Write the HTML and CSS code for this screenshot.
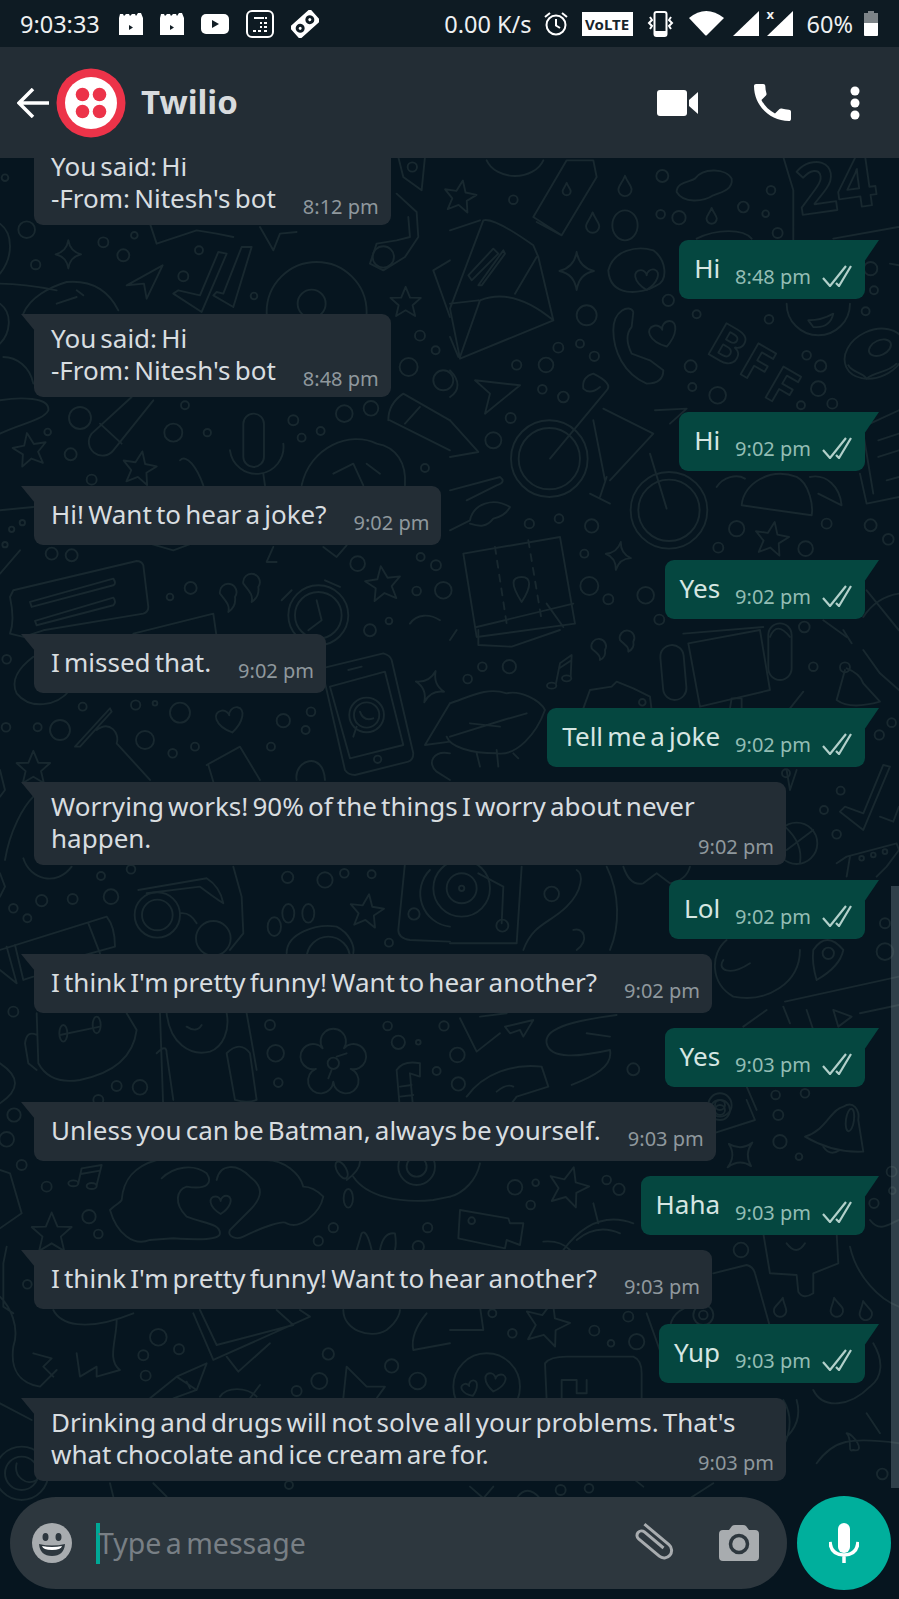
FILE: index.html
```html
<!DOCTYPE html>
<html>
<head>
  <meta charset="utf-8">
  <title>Twilio</title>
  <link rel="stylesheet" href="styles.css">
</head>
<body>
  <div class="phone">

    <!-- status bar -->
    <div class="status">
      <div class="status-left">
        <span class="clock">9:03:33</span>
        <svg width="24" height="22" viewBox="0 0 24 22"><path class="w" d="M0 5 1 1h3l1 2 2-2h3l1 2 2-2h3l1 2 2-3h3l2 5v17H0z"/><path class="k" d="M10 12l4 2.500-4 2.500z"/></svg>
        <svg width="24" height="22" viewBox="0 0 24 22"><path class="w" d="M0 5 1 1h3l1 2 2-2h3l1 2 2-2h3l1 2 2-3h3l2 5v17H0z"/><path class="k" d="M10 12l4 2.500-4 2.500z"/></svg>
        <svg width="28" height="20" viewBox="0 0 28 20"><rect class="w" width="28" height="20" rx="5"/><path class="k" d="M11 6l7 4-7 4z"/></svg>
        <svg width="28" height="28" viewBox="0 0 28 28"><rect class="line" x="1" y="1" width="26" height="26" rx="5"/><path class="w" d="M8 7h10v2H8zM19 7h2v2h-2zM14 12h2v2h-2zM18 12h3v2h-3zM14 16h2v2h-2zM18 16h3v2h-3zM7 20h3v2H7zM12 20h3v2h-3zM18 20h3v2h-3z"/></svg>
        <svg width="28" height="28" viewBox="0 0 28 28"><g transform="rotate(-42 14 14)"><rect class="w" x="0" y="6" width="28" height="16" rx="2"/><circle class="k" cx="7.500" cy="14" r="4.500"/><circle class="k" cx="20.500" cy="14" r="4.500"/><circle class="w" cx="7.500" cy="14" r="1.500"/><circle class="w" cx="20.500" cy="14" r="1.500"/></g></svg>
      </div>
      <div class="status-right">
        <span class="speed">0.00 K/s</span>
        <svg width="24" height="26" viewBox="0 0 24 26"><circle class="line" cx="12" cy="14" r="9.500"/><path class="line" d="M12 8v6.500l4 2.500M1 6l5-4M23 6l-5-4"/></svg>
        <span class="volte">V<i>o</i>LTE</span>
        <svg width="27" height="26" viewBox="0 0 27 26"><rect class="line" x="7.500" y="1" width="12" height="24" rx="2"/><path class="w" d="M8 20h11v5H8z"/><path class="line" d="M3 6l2 3-3 3 3 3-2 3M24 6l-2 3 3 3-3 3 2 3"/></svg>
        <div class="signal">
          <svg width="37" height="27" viewBox="0 0 37 27"><path class="w" d="M1 8Q18-6 36 8L19 25q-1 1-2 0z"/></svg>
          <svg width="26" height="25" viewBox="0 0 26 25"><path class="w" d="M26 0v25H0z"/></svg>
          <div class="sim">
            <span class="sim-x">x</span>
            <svg width="26" height="25" viewBox="0 0 26 25"><path class="w" d="M26 0v25H0z"/></svg>
          </div>
        </div>
        <span class="level">60%</span>
        <svg width="14" height="25" viewBox="0 0 14 25"><path class="dim" d="M4 0h6v2h4v11H0V2h4z"/><path class="w" d="M0 12h14v12q0 1-1 1H1q-1 0-1-1z"/></svg>
      </div>
    </div>

    <!-- header -->
    <div class="header">
      <svg class="back" width="32" height="30" viewBox="0 0 32 30"><path d="M32 15H2M16 1 2 15l14 14"/></svg>
      <svg class="avatar" width="70" height="70" viewBox="0 0 70 70">
        <circle cx="35" cy="35" r="34.500" fill="#ec3349"/>
        <circle cx="35" cy="35" r="26" fill="#fff"/>
        <circle cx="26.500" cy="26.500" r="6.800" fill="#ec3349"/>
        <circle cx="43.500" cy="26.500" r="6.800" fill="#ec3349"/>
        <circle cx="26.500" cy="43.500" r="6.800" fill="#ec3349"/>
        <circle cx="43.500" cy="43.500" r="6.800" fill="#ec3349"/>
      </svg>
      <span class="title">Twilio</span>
      <div class="actions">
        <svg width="41" height="26" viewBox="0 0 41 26"><rect class="w" width="30" height="26" rx="3"/><path class="w" d="M32 10 41 2v22l-9-8z"/></svg>
        <svg width="37" height="37" viewBox="3 3 18 18"><path class="w" d="M6.620 10.790c1.440 2.830 3.760 5.140 6.590 6.590l2.200-2.200c.27-.27.67-.36 1.020-.24 1.120.37 2.330.57 3.570.57.55 0 1 .45 1 1V20c0 .55-.45 1-1 1-9.390 0-17-7.610-17-17 0-.55.45-1 1-1h3.500c.55 0 1 .45 1 1 0 1.250.2 2.450.57 3.570.11.35.03.74-.25 1.020l-2.200 2.200z"/></svg>
        <svg class="more" width="10" height="34" viewBox="0 0 10 34"><circle class="w" cx="5" cy="5" r="4.500"/><circle class="w" cx="5" cy="17" r="4.500"/><circle class="w" cx="5" cy="29" r="4.500"/></svg>
      </div>
    </div>

    <!-- chat -->
    <div class="chat">
      <svg class="doodles" width="899" height="1441" viewBox="0 158 899 1441">
        <defs>
          <path id="star" d="M0-50 14-16 48-15 22 8 30 42 0 24-30 42-22 8-48-15-14-16Z"/>
          <path id="spark" d="M0-50Q6-10 45 0 6 8 0 50-6 8-45 0-6-10 0-50Z"/>
          <path id="heart" d="M0 40C-50 10-50-30-20-30-8-30 0-18 0-12 0-24 14-36 28-32 52-24 40 14 0 40Z"/>
          <path id="drop" d="M0-32C-8-10-22 2-22 14A22 22 0 0 0 22 14C22 2 8-10 0-32Z"/>
        </defs>

        <!-- top left -->
        <g transform="translate(0 157) scale(.3333)">
          <circle cx="80" cy="218" r="25"/><circle cx="15" cy="62" r="10"/><circle cx="310" cy="256" r="15"/><circle cx="403" cy="235" r="10"/><circle cx="370" cy="295" r="18"/><circle cx="107" cy="323" r="14"/><circle cx="597" cy="280" r="12"/><circle cx="550" cy="358" r="15"/><circle cx="762" cy="417" r="10"/><circle cx="1260" cy="536" r="15"/><circle cx="1307" cy="580" r="12"/><circle cx="1226" cy="630" r="27"/><circle cx="1330" cy="670" r="30"/><circle cx="555" cy="745" r="12"/><circle cx="240" cy="783" r="33"/><circle cx="520" cy="827" r="27"/><circle cx="622" cy="827" r="11"/><circle cx="143" cy="825" r="10"/><circle cx="212" cy="892" r="18"/><circle cx="275" cy="968" r="15"/><circle cx="880" cy="790" r="15"/><circle cx="905" cy="842" r="12"/><circle cx="962" cy="822" r="12"/><circle cx="1033" cy="770" r="25"/><circle cx="1113" cy="754" r="22"/><circle cx="1275" cy="933" r="12"/><circle cx="155" cy="1190" r="18"/><circle cx="215" cy="1195" r="18"/><circle cx="35" cy="1117" r="8"/><circle cx="67" cy="1097" r="8"/><circle cx="15" cy="1163" r="8"/><circle cx="1073" cy="1220" r="22"/><circle cx="1262" cy="1200" r="12"/><circle cx="1308" cy="1225" r="15"/><circle cx="1250" cy="1302" r="13"/><circle cx="1330" cy="1300" r="25"/><circle cx="1167" cy="1392" r="10"/><circle cx="1110" cy="1420" r="18"/><circle cx="572" cy="1293" r="18"/><circle cx="510" cy="1320" r="10"/><circle cx="1237" cy="30" r="14"/>
          <use href="#spark" transform="translate(205 292) scale(.85)"/>
          <use href="#star" transform="translate(1217 437) scale(.95)"/>
          <use href="#star" transform="translate(90 880) rotate(-10) scale(1.050)"/>
          <use href="#star" transform="translate(418 935) rotate(10) scale(1.050)"/>
          <use href="#star" transform="translate(1150 1282) rotate(-8) scale(1.100)"/>
          <path d="M380 385 488 325 440 425 432 380Z"/>
          <path d="M520 410 605 465 680 290 655 285 600 415 535 400Z"/>
          <path d="M640 415 700 450 755 270 725 270 670 410 650 405Z"/>
          <circle cx="950" cy="465" r="150"/><circle cx="935" cy="440" r="42"/>
          <path d="M1195 0 1210 60 1265 100 1275 0"/>
          <path d="M1190 110 1250 165 1255 240 1215 300 1150 340 1110 320 1130 260 1190 250 1230 240 1225 180"/>
          <circle cx="1150" cy="300" r="32"/>
          <path d="M70 470C90 420 150 390 200 375 260 370 320 390 355 460M170 440 230 420M230 400 250 415"/>
          <path d="M0 200C40 230 40 300 0 350M0 380C60 380 120 390 170 400M0 440C40 470 30 530 0 560M10 600C50 600 90 630 100 680M0 730C60 720 150 720 145 760 130 790 60 800 0 830"/>
          <path d="M460 730 340 880A30 30 0 0 1 275 830L395 720M300 800 365 860"/>
          <rect x="730" y="770" width="62" height="160" rx="31"/>
          <path d="M690 880A75 75 0 0 0 850 860M790 950 795 985M540 910C560 890 590 930 610 985"/>
          <path d="M905 985C930 870 1050 820 1130 860 1190 870 1220 920 1215 985M1000 950 1060 920 1090 985M1100 920 1140 950"/>
          <path d="M450 200 470 260 590 220 650 230 700 240M780 210 820 280 840 230 890 225"/>
          <path d="M1165 790Q1165 740 1210 710L1350 790M1170 790 1350 880M1215 800 1260 750"/>
          <path d="M1300 340 1350 310M1300 340 1350 480"/>
          <path d="M40 1300 410 1212Q425 1212 430 1225L445 1350Q445 1365 430 1370L130 1420 70 1440 30 1430Q45 1390 30 1320Z"/>
          <path d="M90 1335 340 1265Q350 1280 340 1285L95 1350ZM105 1392 340 1322Q350 1335 340 1345L110 1405Z"/>
          <path d="M660 1310A25 25 0 1 1 705 1320C708 1340 700 1355 685 1365 690 1345 680 1335 660 1310ZM730 1280A25 25 0 1 1 775 1290C778 1310 770 1325 755 1335 760 1315 750 1305 730 1280Z"/>
          <circle cx="955" cy="1375" r="90"/><circle cx="955" cy="1375" r="70"/>
          <path d="M950 1330 965 1390 925 1420M845 1330 875 1300M975 1270 1020 1290"/>
          <path d="M450 1160 520 1180 600 1150M820 1170 800 1215 830 1215M970 1170 1010 1200 1040 1165M0 1060 100 1050M0 1250 60 1180M1230 1400C1250 1370 1290 1370 1320 1390"/>
          <path d="M400 1430 640 1370 650 1440"/>
        </g>

        <!-- top right -->
        <g transform="translate(450 157) scale(.3333)">
          <use href="#star" transform="translate(30 120) rotate(10)"/>
          <path d="M250 180 350 10 430 10 440 60 335 235ZM260 195 335 235M110 10A90 70 0 0 0 280 10"/>
          <use href="#drop" transform="translate(350 95) scale(.55)"/>
          <use href="#drop" transform="translate(525 85) scale(.9)"/>
          <use href="#drop" transform="translate(428 195) scale(.9)"/>
          <use href="#drop" transform="translate(785 175) scale(.7)"/>
          <circle cx="637" cy="57" r="18"/><circle cx="190" cy="128" r="13"/><circle cx="632" cy="172" r="13"/><circle cx="687" cy="182" r="20"/><circle cx="880" cy="150" r="16"/><circle cx="947" cy="170" r="10"/><circle cx="963" cy="100" r="13"/><circle cx="983" cy="228" r="15"/><circle cx="1262" cy="335" r="20"/><circle cx="1272" cy="400" r="12"/>
          <ellipse cx="525" cy="205" rx="38" ry="45"/>
          <path d="M680 105C680 75 720 75 735 65 760 30 830 35 845 65 850 95 820 105 790 115 760 135 700 140 680 105Z"/>
          <path d="M1000 0 1030 100 1030 250M1150 245 1345 210M1320 320 1347 325M740 245C800 215 880 215 905 245"/>
          <text transform="translate(1050 175) rotate(-8)" font-size="210">24</text>
          <path d="M25 600 0 540M0 455 100 190Q130 180 250 265L265 300 310 490 30 605ZM30 600 90 430Q190 390 310 490M195 410 260 300M0 220 90 190M0 440 85 430"/>
          <path d="M55 355 130 275 145 290 65 370ZM85 385 160 280 165 290 95 385Z"/>
          <use href="#spark" transform="translate(380 342) scale(1.150)"/>
          <path d="M475 340C490 280 560 265 610 280 650 310 655 370 620 385 570 415 480 420 475 340Z"/>
          <use href="#heart" transform="translate(590 365) scale(.85)"/>
          <circle cx="655" cy="430" r="17"/><circle cx="410" cy="475" r="30"/><circle cx="325" cy="572" r="15"/><circle cx="390" cy="560" r="12"/><circle cx="433" cy="598" r="14"/><circle cx="200" cy="624" r="14"/><circle cx="288" cy="624" r="22"/><circle cx="277" cy="697" r="13"/><circle cx="340" cy="720" r="16"/><circle cx="182" cy="783" r="15"/><circle cx="130" cy="850" r="24"/><circle cx="740" cy="472" r="12"/><circle cx="957" cy="487" r="13"/><circle cx="1247" cy="463" r="12"/>
          <path d="M490 520C490 460 540 440 550 465L545 510Q520 540 545 590L600 610 640 640Q640 680 590 680C520 650 490 580 490 520Z"/>
          <use href="#heart" transform="translate(640 530) rotate(-15)"/>
          <text transform="translate(765 585) rotate(30)" font-size="150">B</text>
          <text transform="translate(860 645) rotate(30)" font-size="150">F</text>
          <text transform="translate(935 715) rotate(30)" font-size="150">F</text>
          <circle cx="722" cy="628" r="18"/><circle cx="727" cy="690" r="12"/><circle cx="803" cy="715" r="25"/><circle cx="1070" cy="595" r="13"/><circle cx="1112" cy="627" r="17"/><circle cx="1105" cy="695" r="22"/><circle cx="1053" cy="745" r="12"/><circle cx="1147" cy="740" r="15"/>
          <ellipse cx="1275" cy="590" rx="95" ry="70" transform="rotate(-25 1275 590)"/>
          <ellipse cx="1290" cy="572" rx="35" ry="22" transform="rotate(-25 1290 572)"/>
          <path d="M1195 625C1210 650 1230 640 1250 665 1280 640 1310 650 1340 620"/>
          <path d="M1010 440A95 95 0 0 0 1200 440M1075 490Q1115 490 1150 470 1140 515 1090 510Z"/>
          <path d="M75 670 210 685 105 770 120 710Z"/>
          <path d="M0 640C30 670 30 700 0 720M0 790 85 885 0 900"/>
          <circle cx="298" cy="905" r="115"/><circle cx="298" cy="905" r="92"/><circle cx="657" cy="1060" r="115"/><circle cx="657" cy="1060" r="92"/>
          <path d="M300 905 470 700Q490 680 430 650 395 660 400 695 420 715 450 690M430 790 465 970M460 755 610 830 480 970M600 890 650 1055M615 760 710 755 660 800M420 1010 480 1040M470 960 450 1020"/>
          <path d="M875 1045C880 980 960 930 1040 960 1080 980 1090 1050 1085 1075ZM800 990C820 960 860 950 885 965M1080 960C1130 950 1170 990 1175 1045L1105 1010"/>
          <use href="#star" transform="translate(965 1147) rotate(10) scale(1.050)"/>
          <circle cx="860" cy="1115" r="23"/><circle cx="805" cy="1172" r="15"/><circle cx="1067" cy="1175" r="22"/><circle cx="1130" cy="1100" r="15"/><circle cx="1262" cy="1105" r="18"/><circle cx="1315" cy="1147" r="16"/><circle cx="425" cy="1107" r="20"/><circle cx="327" cy="1085" r="13"/><circle cx="238" cy="1100" r="14"/><circle cx="403" cy="1190" r="12"/>
          <use href="#spark" transform="translate(505 1197) rotate(10) scale(.85)"/>
          <path d="M40 1190 330 1140 375 1400 80 1440ZM80 1410 370 1340M290 1340 340 1410"/>
          <path class="dash" d="M135 1170 170 1400M235 1150 275 1390"/>
          <path d="M215 1335C180 1280 185 1260 215 1260 245 1260 245 1290 215 1335Z"/>
          <circle cx="418" cy="1287" r="27"/><circle cx="475" cy="1327" r="15"/><circle cx="587" cy="1315" r="25"/><circle cx="628" cy="1388" r="15"/><circle cx="1063" cy="1410" r="16"/>
          <path d="M0 1000 150 960Q170 975 140 985L50 1030M0 1120 60 1090C70 1040 130 1020 180 1050 170 1070 150 1080 130 1085 110 1110 90 1110 60 1100"/>
          <path d="M1230 950 1250 1040 1347 1020M1260 800 1347 760M1285 850 1347 830M1285 900 1347 880M1310 970 1347 960M1240 830 1270 1010"/>
          <path d="M700 1430 940 1410M960 1440Q980 1390 1020 1440M1120 1390 1190 1440M1250 1300 1347 1420M1240 1380Q1280 1320 1347 1310"/>
        </g>

        <!-- middle left -->
        <g transform="translate(0 630) scale(.3333)">
          <path d="M100 80C60 110 30 150 50 190 90 240 170 230 210 180"/>
          <circle cx="20" cy="88" r="13"/><circle cx="18" cy="292" r="13"/><circle cx="113" cy="292" r="12"/><circle cx="180" cy="300" r="30"/><circle cx="248" cy="230" r="12"/><circle cx="407" cy="225" r="14"/><circle cx="465" cy="220" r="7"/><circle cx="540" cy="248" r="30"/><circle cx="435" cy="330" r="27"/><circle cx="518" cy="370" r="13"/><circle cx="585" cy="350" r="12"/><circle cx="850" cy="272" r="20"/><circle cx="933" cy="245" r="13"/><circle cx="917" cy="300" r="12"/><circle cx="813" cy="350" r="12"/>
          <use href="#heart" transform="translate(690 268) rotate(-10)"/>
          <path d="M225 350 330 235 335 245 240 350ZM290 300C330 270 360 310 350 340L450 450"/>
          <use href="#star" transform="translate(100 415) scale(1.050)"/>
          <path d="M620 405 720 350 780 450M640 455 625 405"/>
          <path d="M965 115 1150 70Q1170 75 1175 90L1240 370Q1240 390 1225 395L1065 435Q1045 435 1035 420ZM990 170 1155 125 1210 345 1050 385ZM1045 120 1085 110"/>
          <circle cx="1100" cy="255" r="52"/><circle cx="1100" cy="255" r="38"/><circle cx="1133" cy="388" r="11"/>
          <path d="M1060 320 1070 290M1080 245Q1090 275 1120 265"/>
          <use href="#spark" transform="translate(1290 170) rotate(20)"/>
          <path d="M1350 220 1275 345 1350 335M890 450C880 390 970 360 975 450M1350 370C1300 360 1280 400 1310 425L1350 450"/>
          <path d="M15 690C30 600 70 530 100 500M70 685C90 750 170 770 215 710M0 420 15 480 0 500M0 730 15 770 0 800"/>
          <circle cx="303" cy="738" r="12"/><circle cx="393" cy="718" r="13"/><circle cx="125" cy="812" r="17"/><circle cx="218" cy="807" r="15"/><circle cx="333" cy="800" r="22"/><circle cx="40" cy="835" r="13"/><circle cx="82" cy="865" r="12"/>
          <circle cx="472" cy="855" r="46"/><circle cx="472" cy="855" r="68"/><circle cx="640" cy="925" r="52"/>
          <path d="M415 780 620 745Q660 770 670 820 640 800 600 770L440 790M540 850Q570 845 590 880M700 710 725 800 730 910 690 960"/>
          <path d="M0 960 320 860Q345 890 345 950L200 990M265 880 300 970M20 950 50 1060 0 1020M45 945 70 1050 100 1040"/>
          <ellipse cx="823" cy="890" rx="20" ry="28"/><ellipse cx="865" cy="850" rx="18" ry="28"/><ellipse cx="925" cy="850" rx="18" ry="28"/>
          <path d="M860 970C860 910 950 880 1010 890 1050 910 1065 950 1060 970"/><circle cx="985" cy="985" r="65"/>
          <use href="#star" transform="translate(1100 845) rotate(8) scale(1.050)"/>
          <circle cx="863" cy="742" r="17"/><circle cx="975" cy="750" r="23"/><circle cx="1033" cy="730" r="13"/><circle cx="1115" cy="733" r="12"/><circle cx="1242" cy="852" r="17"/><circle cx="1167" cy="938" r="12"/>
          <path d="M1215 700 1195 900Q1195 925 1230 930L1350 935M1290 720A100 100 0 0 0 1350 890"/>
          <path d="M110 1150 115 1300Q150 1365 240 1350C340 1330 400 1280 410 1200L380 1150M75 1240Q80 1200 110 1215M75 1240 85 1300 110 1320M180 1215 300 1190"/>
          <ellipse cx="190" cy="1210" rx="12" ry="25"/><ellipse cx="290" cy="1185" rx="12" ry="25"/>
          <path d="M480 1150 490 1440M500 1150C510 1240 570 1280 630 1265 670 1250 690 1200 680 1150M560 1190Q590 1210 605 1185M740 1150 770 1320M470 1270Q500 1240 500 1270L520 1410M680 1270Q720 1230 750 1270L770 1410Q740 1420 705 1410Z"/>
          <circle cx="40" cy="1145" r="15"/><circle cx="810" cy="1185" r="15"/><circle cx="827" cy="1270" r="25"/><circle cx="835" cy="1358" r="13"/><circle cx="350" cy="1368" r="15"/><circle cx="420" cy="1372" r="22"/><circle cx="295" cy="1410" r="15"/><circle cx="1163" cy="1188" r="13"/><circle cx="1195" cy="1237" r="20"/><circle cx="1255" cy="1237" r="7"/><circle cx="1332" cy="1188" r="14"/><circle cx="1310" cy="1323" r="12"/>
          <path d="M968 1255A38 38 0 1 1 1032 1255 38 38 0 1 1 1052 1317 38 38 0 1 1 1000 1355 38 38 0 1 1 948 1317 38 38 0 1 1 968 1255Z"/>
          <circle cx="1000" cy="1300" r="17"/>
          <path d="M985 1345 995 1320M1010 1280 1040 1270"/>
          <path d="M1200 1440 1190 1320Q1210 1290 1260 1300L1260 1340 1230 1330 1240 1440M1200 1370 1235 1365M1200 1400 1240 1395"/>
          <path d="M0 1300C60 1340 60 1380 0 1420"/>
        </g>

        <!-- middle right -->
        <g transform="translate(450 630) scale(.3333)">
          <circle cx="97" cy="110" r="13"/><circle cx="53" cy="147" r="13"/><circle cx="178" cy="110" r="20"/><circle cx="1090" cy="110" r="13"/><circle cx="1325" cy="278" r="13"/><circle cx="1288" cy="315" r="14"/><circle cx="1172" cy="482" r="12"/><circle cx="1122" cy="540" r="12"/><circle cx="1160" cy="613" r="13"/><circle cx="1235" cy="685" r="7"/><circle cx="1270" cy="675" r="7"/><circle cx="1305" cy="665" r="7"/><circle cx="305" cy="792" r="22"/><circle cx="577" cy="217" r="10"/><circle cx="22" cy="1275" r="22"/><circle cx="550" cy="1318" r="18"/><circle cx="25" cy="1362" r="20"/><circle cx="977" cy="1395" r="13"/><circle cx="1065" cy="1390" r="13"/><circle cx="1135" cy="970" r="17"/><circle cx="1305" cy="880" r="15"/><circle cx="1305" cy="965" r="25"/>
          <ellipse cx="305" cy="167" rx="14" ry="9"/><ellipse cx="350" cy="145" rx="14" ry="9"/>
          <path d="M318 160 330 100 365 75 362 140M328 115 362 92"/>
          <path d="M425 55A22 22 0 1 1 465 60C468 75 460 85 450 90 452 75 440 70 425 55ZM510 30A22 22 0 1 1 550 35C553 50 545 60 535 65 537 50 525 45 510 30Z"/>
          <path d="M85 0 85 45 185 50 330 0M0 30 20 0"/>
          <rect x="635" y="45" width="70" height="165" rx="35" transform="rotate(-5 670 125)"/>
          <path d="M715 40 930 0 960 180 750 230Z"/><rect x="955" y="-20" width="70" height="170" rx="35"/>
          <path d="M0 220C60 200 110 170 170 190 210 180 270 210 285 240 260 310 200 380 140 370 60 370 0 350-10 320M0 320 160 270 230 250M60 280 150 290M80 370 90 410M140 360 145 410M190 370 205 385"/>
          <path d="M400 235 420 180 485 170 500 155 550 175 600 200 605 240"/>
          <path d="M1185 120 1160 210Q1200 240 1290 215L1240 160Q1230 130 1190 115"/><circle cx="1185" cy="112" r="15"/>
          <path d="M1020 235 1060 185M840 235 845 205 875 205 875 235M1240 60 1290 130 1347 180M1180 0 1205 40"/>
          <path d="M1170 545 1240 600 1320 410 1300 405 1240 550 1185 530ZM1290 560 1330 575 1347 530"/>
          <path d="M1010 420 1020 480 1040 420"/><circle cx="1008" cy="430" r="12"/>
          <circle cx="1040" cy="640" r="62"/>
          <path d="M1005 590Q1060 640 1050 700M1010 660 1090 600"/>
          <path d="M1160 700 1190 680 1340 640 1347 660 1310 710 1280 740M1200 680 1190 740"/>
          <path d="M1090 960Q1130 900 1180 960 1170 1010 1100 1050 1085 1000 1090 960Z"/>
          <circle cx="35" cy="775" r="85"/><circle cx="35" cy="775" r="45"/><circle cx="35" cy="775" r="8"/>
          <path d="M85 730 160 770 155 880M215 710 200 940 0 940"/><circle cx="157" cy="887" r="18"/>
          <path d="M220 960C250 880 300 880 350 830 400 780 400 730 380 720M470 710C510 790 510 890 480 960M380 960C420 930 400 890 370 900"/>
          <path d="M520 710Q540 770 580 760L620 730 660 760Q710 750 720 710"/>
          <path d="M830 930C780 970 780 1060 850 1100 950 1120 1050 1060 1050 960M820 990C800 1020 840 1040 900 1000"/>
          <path d="M1005 1115 1347 1040M1000 1130 1020 1180M1230 1150 1347 1125M1150 1140 1205 1160 1165 1190ZM1070 1140 1090 1200M880 1190 950 1140"/>
          <path d="M30 1165 80 1265 150 1210M165 1190 250 1170 220 1220 210 1200 180 1210ZM90 1160 170 1150"/>
          <path d="M500 1155C390 1170 280 1190 290 1240 300 1290 390 1280 480 1260 490 1310 430 1340 365 1365M410 1210 480 1220"/>
          <path d="M50 1400C100 1330 190 1300 275 1310L295 1370 200 1400 170 1440M140 1385Q170 1360 190 1370"/>
          <circle cx="810" cy="1425" r="35"/><circle cx="810" cy="1425" r="15"/>
          <path d="M890 1370 920 1440"/>
        </g>

        <!-- bottom left -->
        <g transform="translate(0 1100) scale(.3333)">
          <circle cx="42" cy="45" r="20"/><circle cx="20" cy="118" r="22"/><circle cx="65" cy="195" r="15"/><circle cx="140" cy="260" r="15"/><circle cx="267" cy="350" r="20"/><circle cx="295" cy="402" r="13"/><circle cx="1000" cy="383" r="14"/><circle cx="955" cy="423" r="14"/><circle cx="1283" cy="383" r="14"/><circle cx="1255" cy="440" r="17"/><circle cx="475" cy="712" r="25"/><circle cx="537" cy="748" r="15"/><circle cx="430" cy="766" r="15"/><circle cx="437" cy="827" r="15"/><circle cx="985" cy="762" r="17"/><circle cx="1175" cy="798" r="20"/><circle cx="958" cy="843" r="24"/><circle cx="1253" cy="843" r="25"/><circle cx="890" cy="873" r="15"/><circle cx="82" cy="553" r="13"/>
          <ellipse cx="220" cy="250" rx="15" ry="9"/><ellipse cx="275" cy="258" rx="15" ry="9"/>
          <path d="M235 250 245 205 305 195 290 255M242 222 300 212"/>
          <use href="#star" transform="translate(155 400) scale(1.250)"/>
          <path d="M485 235C520 200 580 190 620 220 640 250 620 270 560 260 530 270 520 310 560 350 610 370 660 370 660 400 660 420 600 420 520 415L450 420C400 440 350 400 330 330 350 310 360 310 365 300 370 240 400 200 470 180"/>
          <path d="M650 240C660 190 710 190 750 230 790 260 790 290 750 330L690 390C680 410 710 420 730 410 790 380 850 360 860 370 900 390 960 340 970 290 940 260 920 260 910 260 900 220 850 180 800 180"/>
          <use href="#heart" transform="translate(662 312) scale(.75)"/>
          <ellipse cx="1025" cy="210" rx="14" ry="28" transform="rotate(-30 1025 210)"/>
          <ellipse cx="1045" cy="295" rx="14" ry="28"/>
          <path d="M1060 230C1100 290 1200 310 1300 300L1350 290M1080 185Q1080 210 1040 240"/>
          <circle cx="1250" cy="200" r="55"/><circle cx="1250" cy="200" r="30"/>
          <path d="M1070 450 1085 400Q1100 385 1115 450M1140 450Q1150 395 1185 400 1190 430 1185 450"/>
          <path d="M20 440 10 490 10 620 40 640M0 590C30 620 60 680 40 740 30 810 60 850 120 860L170 810M100 760 155 775 130 800 160 830M230 760 240 830 290 800 290 830 360 810C320 780 350 720 350 660M160 630C180 670 250 700 400 640"/>
          <path d="M580 640 640 780 930 650 900 630M600 630 650 735 880 675 830 630M680 770 715 815 810 730"/>
          <path d="M450 895 530 830 620 790 590 870 520 895M530 830 590 870M560 845 570 865"/>
          <path d="M1040 800 1030 895M1040 800 1100 860 1155 860 1130 895"/>
          <path d="M1030 630C1030 690 1110 720 1160 690 1200 660 1200 630 1200 630M1240 750Q1230 700 1280 640M1240 750 1350 730"/>
          <path d="M0 210 30 220 65 340 0 385"/>
          <circle cx="65" cy="1120" r="80"/><circle cx="65" cy="1120" r="50"/>
          <path d="M0 910 95 960M50 1090C40 1130 80 1160 110 1140"/>
          <path d="M330 1150 340 1190M460 1150 500 1190"/>
          <circle cx="867" cy="1155" r="12"/>
          <path d="M660 890C680 860 740 860 770 890M750 895 780 855"/>
        </g>

        <!-- bottom right -->
        <g transform="translate(450 1100) scale(.3333)">
          <circle cx="985" cy="45" r="15"/><circle cx="990" cy="125" r="20"/><circle cx="1047" cy="170" r="10"/><circle cx="195" cy="262" r="22"/><circle cx="257" cy="248" r="10"/><circle cx="242" cy="315" r="13"/><circle cx="470" cy="240" r="13"/><circle cx="507" cy="268" r="17"/><circle cx="1325" cy="215" r="15"/><circle cx="1327" cy="272" r="10"/><circle cx="1272" cy="310" r="14"/><circle cx="873" cy="450" r="22"/><circle cx="535" cy="650" r="15"/><circle cx="127" cy="640" r="12"/><circle cx="187" cy="700" r="13"/><circle cx="433" cy="692" r="15"/><circle cx="483" cy="730" r="10"/><circle cx="560" cy="725" r="23"/><circle cx="332" cy="1170" r="15"/><circle cx="417" cy="1165" r="13"/><circle cx="1297" cy="1122" r="16"/>
          <circle cx="810" cy="30" r="30"/><circle cx="810" cy="30" r="15"/>
          <path d="M790 100 915 60 890 0M90 190C80 240 40 280 0 290"/>
          <path d="M1065 110C1130 90 1140 30 1180 20 1210 0 1230 30 1225 60L1240 155Q1150 160 1065 110Z"/>
          <ellipse cx="1200" cy="60" rx="12" ry="34" transform="rotate(8 1200 60)"/>
          <path d="M1120 140Q1140 170 1170 150"/>
          <use href="#spark" transform="translate(870 165) rotate(45) scale(1.050)"/>
          <use href="#star" transform="translate(355 262) rotate(15) scale(1.250)"/>
          <path d="M30 330 175 355 180 370 220 370 210 435 170 420 165 445 25 415Z"/><circle cx="65" cy="362" r="10"/>
          <path d="M340 450C400 370 470 340 550 370M280 425Q330 420 360 450M430 310 445 370M380 420Q440 370 510 400"/>
          <path d="M940 400 1160 400 1165 490 1090 520 1090 580Q1060 600 1045 575L1040 525 960 520ZM1010 430Q1040 470 1065 430"/>
          <use href="#drop" transform="translate(993 620) rotate(12) scale(.85)"/>
          <use href="#drop" transform="translate(1158 620) rotate(-12) scale(.85)"/>
          <use href="#drop" transform="translate(1245 630) rotate(-12) scale(.85)"/>
          <path d="M790 520 890 495Q910 500 915 520L960 680M590 640 640 780M660 680Q670 620 760 610"/>
          <circle cx="760" cy="645" r="30"/><circle cx="760" cy="645" r="13"/>
          <use href="#star" transform="translate(290 672) rotate(15) scale(1.400)"/>
          <path d="M0 690 100 690 90 620"/>
          <circle cx="110" cy="860" r="100"/>
          <use href="#heart" transform="translate(60 865) rotate(-20) scale(.6)"/>
          <use href="#heart" transform="translate(135 845) rotate(10) scale(.75)"/>
          <path d="M285 790Q300 770 350 770L550 770Q575 780 575 820L575 900M285 790 290 900M335 900 335 840 380 840 380 880 410 880 410 840"/>
          <path d="M1000 900C1030 950 1020 1000 1000 1040M1040 900Q1060 970 1000 1020"/>
          <path d="M1190 1000C1210 1000 1250 1060 1210 1050 1190 1060 1210 1020 1190 1000M1090 870C1120 930 1200 920 1260 860 1300 830 1300 780 1270 730M1100 1090C1150 1020 1200 1010 1347 1030M1250 940 1290 1000M1260 360C1290 400 1320 370 1347 360"/>
          <path d="M1200 440C1220 530 1290 600 1347 620"/>
          <path d="M60 1160 100 1195 130 1160M200 1195Q230 1150 270 1195M530 1120 580 1160M790 1150 720 1195"/>
        </g>
      </svg>

      <div class="msg in two first">
        <p>You said: Hi
-From: Nitesh's bot</p>
        <span class="time">8:12 pm</span>
      </div>
      <div class="msg out">
        <p>Hi</p>
        <span class="time">8:48 pm</span>
        <svg class="ticks" width="30" height="22" viewBox="0 0 30 22"><path d="M1 13l7 8L24 1M14 18l3 3L29 1"/></svg>
      </div>
      <div class="msg in two">
        <p>You said: Hi
-From: Nitesh's bot</p>
        <span class="time">8:48 pm</span>
      </div>
      <div class="msg out">
        <p>Hi</p>
        <span class="time">9:02 pm</span>
        <svg class="ticks" width="30" height="22" viewBox="0 0 30 22"><path d="M1 13l7 8L24 1M14 18l3 3L29 1"/></svg>
      </div>
      <div class="msg in">
        <p>Hi! Want to hear a joke?</p>
        <span class="time">9:02 pm</span>
      </div>
      <div class="msg out">
        <p>Yes</p>
        <span class="time">9:02 pm</span>
        <svg class="ticks" width="30" height="22" viewBox="0 0 30 22"><path d="M1 13l7 8L24 1M14 18l3 3L29 1"/></svg>
      </div>
      <div class="msg in">
        <p>I missed that.</p>
        <span class="time">9:02 pm</span>
      </div>
      <div class="msg out">
        <p>Tell me a joke</p>
        <span class="time">9:02 pm</span>
        <svg class="ticks" width="30" height="22" viewBox="0 0 30 22"><path d="M1 13l7 8L24 1M14 18l3 3L29 1"/></svg>
      </div>
      <div class="msg in two wide">
        <p>Worrying works! 90% of the things I worry about never happen.</p>
        <span class="time">9:02 pm</span>
      </div>
      <div class="msg out">
        <p>Lol</p>
        <span class="time">9:02 pm</span>
        <svg class="ticks" width="30" height="22" viewBox="0 0 30 22"><path d="M1 13l7 8L24 1M14 18l3 3L29 1"/></svg>
      </div>
      <div class="msg in">
        <p>I think I'm pretty funny! Want to hear another?</p>
        <span class="time">9:02 pm</span>
      </div>
      <div class="msg out">
        <p>Yes</p>
        <span class="time">9:03 pm</span>
        <svg class="ticks" width="30" height="22" viewBox="0 0 30 22"><path d="M1 13l7 8L24 1M14 18l3 3L29 1"/></svg>
      </div>
      <div class="msg in">
        <p>Unless you can be Batman, always be yourself.</p>
        <span class="time">9:03 pm</span>
      </div>
      <div class="msg out">
        <p>Haha</p>
        <span class="time">9:03 pm</span>
        <svg class="ticks" width="30" height="22" viewBox="0 0 30 22"><path d="M1 13l7 8L24 1M14 18l3 3L29 1"/></svg>
      </div>
      <div class="msg in">
        <p>I think I'm pretty funny! Want to hear another?</p>
        <span class="time">9:03 pm</span>
      </div>
      <div class="msg out">
        <p>Yup</p>
        <span class="time">9:03 pm</span>
        <svg class="ticks" width="30" height="22" viewBox="0 0 30 22"><path d="M1 13l7 8L24 1M14 18l3 3L29 1"/></svg>
      </div>
      <div class="msg in two wide">
        <p>Drinking and drugs will not solve all your problems. That's what chocolate and ice cream are for.</p>
        <span class="time">9:03 pm</span>
      </div>

      <div class="scrollbar"></div>

      <!-- input bar -->
      <div class="composer">
        <div class="field">
          <svg width="40" height="40" viewBox="0 0 40 40">
            <circle cx="20" cy="20" r="20" fill="#a8acaf"/>
            <ellipse cx="13.500" cy="14" rx="3" ry="4" fill="#2d373e"/>
            <ellipse cx="26.500" cy="14" rx="3" ry="4" fill="#2d373e"/>
            <path d="M7 21Q20 24 33 21 32 33 20 33 8 33 7 21Z" fill="#2d373e"/>
            <path d="M10 23Q20 25 30 23 29 27 20 27 11 27 10 23Z" fill="#fff"/>
          </svg>
          <span class="caret"></span>
          <span class="placeholder">Type a message</span>
          <svg class="clip" width="48" height="40" viewBox="0 0 48 40"><path transform="rotate(40 24 20)" d="M3 13H35A7.500 7.500 0 0 1 35 28H8A4.500 4.500 0 0 1 8 19H33"/></svg>
          <svg class="cam" width="40" height="36" viewBox="0 0 40 36">
            <path d="M0 9Q0 5 4 5H10L13 1Q14 0 16 0H24Q26 0 27 1L30 5H36Q40 5 40 9V32Q40 36 36 36H4Q0 36 0 32Z" fill="#a8acaf"/>
            <circle cx="20" cy="19" r="8.500" fill="none" stroke="#2d373e" stroke-width="3.500"/>
          </svg>
        </div>
        <div class="mic">
          <svg width="30" height="40" viewBox="0 0 30 40">
            <rect x="9" y="0" width="12" height="30" rx="6" fill="#fff"/>
            <path d="M1 19Q2 32 15 32 28 32 29 19M15 31V40" fill="none" stroke="#fff" stroke-width="3.500"/>
          </svg>
        </div>
      </div>
    </div>
  </div>
</body>
</html>
```

FILE: styles.css
```css
/* page */
body {
  margin: 0;
  background: #06151f;
  font-family: "Noto Sans", "Open Sans", sans-serif;
  overflow: hidden;
}

.phone {
  width: 899px;
  height: 1599px;
  display: flex;
  flex-direction: column;
  overflow: hidden;
}

svg {
  display: block;
  flex: none;
}

.w { fill: #fff; }
.k { fill: #101c24; }
.dim { fill: #7d8488; }
.line { fill: none; stroke: #fff; stroke-width: 2; }

/* status bar */
.status {
  height: 47px;
  flex: none;
  background: #0e1b23;
  color: #eef0f1;
  display: flex;
  align-items: center;
  justify-content: space-between;
  padding: 0 21px 0 20px;
  font-size: 23.500px;
}

.status-left,
.status-right,
.signal {
  display: flex;
  align-items: center;
}

.status-left { gap: 17px; }
.status-left .clock { margin-right: 2px; }
.status-right { gap: 14px; }
.status-right .speed { margin-right: -2px; }
.status-right .level { margin-right: -3px; }
.signal { gap: 8px; }

.sim { position: relative; }

.sim-x {
  position: absolute;
  left: 0;
  top: -6px;
  font-size: 13px;
  font-weight: 700;
}

.volte {
  width: 51px;
  height: 24px;
  background: #fff;
  color: #18242c;
  font-size: 15px;
  font-weight: 700;
  line-height: 24px;
  text-align: center;
}

.volte i {
  font-style: normal;
}

/* header */
.header {
  height: 111px;
  flex: none;
  background: #232d35;
  display: flex;
  align-items: center;
  position: relative;
  z-index: 2;
}

.back {
  margin-left: 17px;
  margin-right: 7px;
}

.back path {
  fill: none;
  stroke: #fff;
  stroke-width: 3.500;
}

.title {
  margin-left: 15px;
  margin-bottom: 2px;
  font-size: 33px;
  font-weight: 700;
  color: #d8dbde;
}

.actions {
  margin-left: auto;
  margin-right: 39px;
  display: flex;
  align-items: center;
  gap: 56px;
}

.more {
  margin-left: 3px;
}

/* chat */
.chat {
  flex: 1;
  position: relative;
  display: flex;
  flex-direction: column;
  gap: 15px;
}

.doodles {
  position: absolute;
  left: 0;
  top: 0;
}

.doodles * {
  fill: none;
  stroke: #18282f;
  stroke-width: 1.900;
  stroke-linejoin: round;
  stroke-linecap: round;
  vector-effect: non-scaling-stroke;
}

.doodles text {
  font-family: "Noto Sans", sans-serif;
  font-weight: 700;
}

.doodles .dash {
  stroke-dasharray: 7 7;
}

.msg {
  position: relative;
  height: 59px;
  box-sizing: border-box;
  display: flex;
  align-items: flex-end;
  font-size: 26px;
  line-height: 32px;
  word-spacing: -2.600px;
  border-radius: 9px;
}

.msg p {
  margin: 0;
}

.time {
  font-size: 20px;
  line-height: 24px;
  white-space: nowrap;
  word-spacing: 0;
}

.msg.in {
  align-self: flex-start;
  margin-left: 34px;
  padding: 0 12px 10px 17px;
  background: #232d35;
  color: #d8dde0;
  border-top-left-radius: 0;
}

.msg.in p {
  margin-right: 27px;
  margin-bottom: 5px;
}

.msg.in .time {
  color: #8f989d;
}

.msg.in::before {
  content: "";
  position: absolute;
  left: -13px;
  top: 0;
  width: 14px;
  height: 17px;
  background: #232d35;
  clip-path: polygon(0 0, 100% 0, 100% 100%);
}

.msg.two {
  height: 83px;
  padding-bottom: 6px;
}

.msg.two p {
  margin-bottom: 5px;
  white-space: pre-line;
}

.msg.first {
  margin-top: -16px;
}

.msg.wide {
  display: block;
  width: 752px;
  padding: 8px 45px 0 17px;
}

.msg.wide p {
  display: inline;
  margin: 0;
  white-space: normal;
}

.msg.wide .time {
  position: absolute;
  right: 12px;
  bottom: 6px;
}

.msg.out {
  align-self: flex-end;
  margin-right: 34px;
  padding: 0 13px 10px 15px;
  background: #054740;
  color: #d6e6e2;
  border-top-right-radius: 0;
}

.msg.out p {
  margin-right: 15px;
  margin-bottom: 5px;
}

.msg.out .time {
  color: #93bdb4;
  margin-right: 11px;
}

.msg.out::after {
  content: "";
  position: absolute;
  right: -14px;
  top: 0;
  width: 15px;
  height: 22px;
  background: #054740;
  clip-path: polygon(0 0, 100% 0, 0 100%);
}

.ticks {
  margin-bottom: 2px;
}

.ticks path {
  fill: none;
  stroke: #b2d0ca;
  stroke-width: 2.200;
}

.scrollbar {
  position: absolute;
  right: 0;
  top: 728px;
  width: 8px;
  height: 602px;
  background: rgba(130, 145, 155, 0.35);
}

/* input bar */
.composer {
  position: absolute;
  left: 10px;
  right: 8px;
  bottom: 9px;
  display: flex;
  align-items: center;
  gap: 10px;
}

.field {
  flex: 1;
  height: 92px;
  background: #2d373e;
  border-radius: 46px;
  display: flex;
  align-items: center;
  padding: 0 28px 0 22px;
}

.caret {
  width: 4px;
  height: 41px;
  background: #00a896;
  margin-left: 24px;
  margin-right: -2px;
}

.placeholder {
  font-size: 28.500px;
  word-spacing: -3px;
  color: #787f85;
}

.clip {
  margin-left: auto;
  overflow: visible;
}

.clip path {
  fill: none;
  stroke: #a8acaf;
  stroke-width: 3;
}

.cam {
  margin-left: 39px;
}

.mic {
  width: 94px;
  height: 94px;
  border-radius: 50%;
  background: #00af9c;
  display: flex;
  align-items: center;
  justify-content: center;
}
```
